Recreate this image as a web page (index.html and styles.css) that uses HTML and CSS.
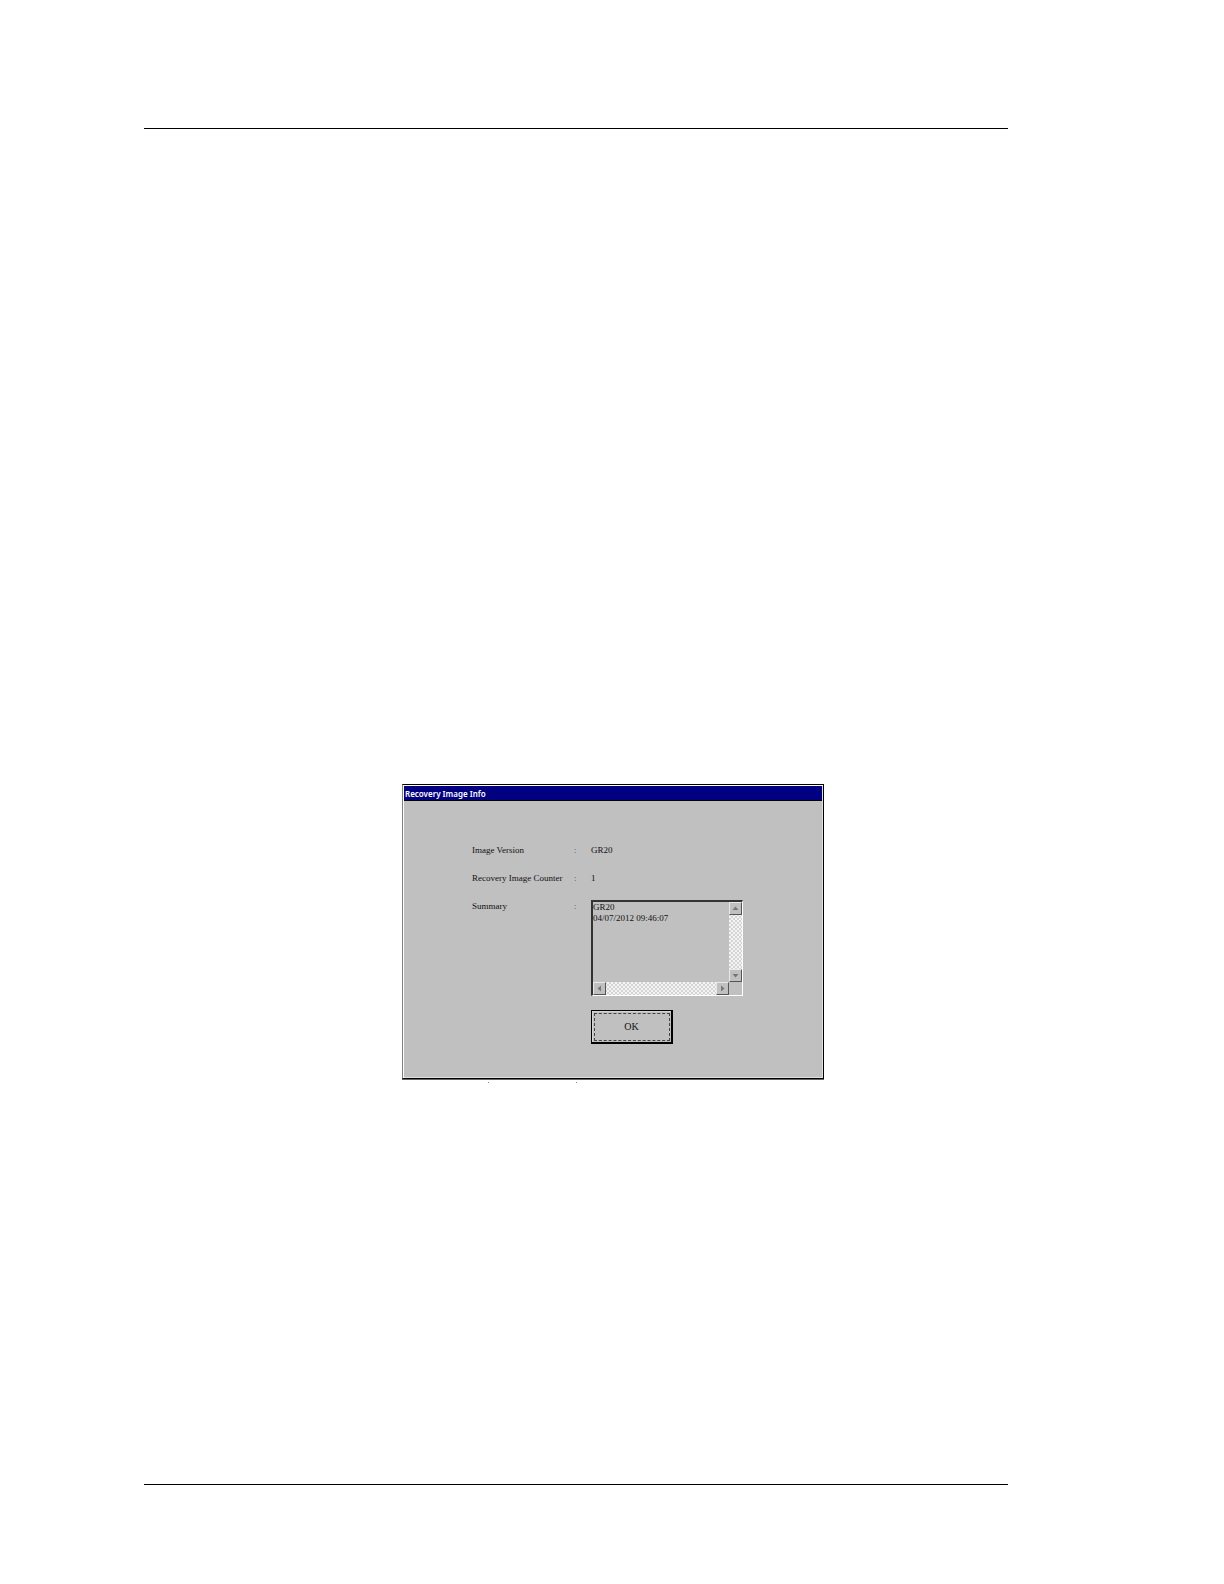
FILE: index.html
```html
<!DOCTYPE html>
<html lang="en">
<head>
  <meta charset="UTF-8" />
  <meta name="viewport" content="width=device-width, initial-scale=1.0"/>
  <title>Recovery Image Info</title>
  <link rel="stylesheet" href="styles.css">
</head>
<body>
  <main class="page">
    <section class="dialog" role="dialog" aria-labelledby="dialog-title">
      <h1 class="title-bar" id="dialog-title">Recovery Image Info</h1>
      <form class="info">
        <span>Image Version</span>
        <span class="colon">:</span>
        <span>GR20</span>

        <span>Recovery Image Counter</span>
        <span class="colon">:</span>
        <span>1</span>

        <label for="summary">Summary</label>
        <span class="colon">:</span>
        <div class="summary-box">
          <textarea id="summary" readonly>GR20
04/07/2012 09:46:07</textarea>
          <div class="scroll-v">
            <button type="button" class="arrow" aria-label="Scroll up"><svg width="7" height="7" viewBox="0 0 7 7"><path d="M3.500 1.500 6.500 5h-6z"/></svg></button>
            <button type="button" class="arrow" aria-label="Scroll down"><svg width="7" height="7" viewBox="0 0 7 7"><path d="M.5 2h6l-3 3.500z"/></svg></button>
          </div>
          <div class="scroll-h">
            <button type="button" class="arrow" aria-label="Scroll left"><svg width="7" height="7" viewBox="0 0 7 7"><path d="M5 .5v6L1.500 3.500z"/></svg></button>
            <button type="button" class="arrow" aria-label="Scroll right"><svg width="7" height="7" viewBox="0 0 7 7"><path d="M2 .5l3.500 3-3.500 3z"/></svg></button>
          </div>
        </div>

        <button type="button" class="ok-btn">OK</button>
      </form>
    </section>
    <div class="marks"><i></i><i></i></div>
  </main>
</body>
</html>
```

FILE: styles.css
```css
* {
  box-sizing: border-box;
}
body {
  margin: 0;
  min-height: 100vh;
  padding: 128px 216px 99px 144px;
  display: flex;
  background: #fff;
  color: #111;
  font-family: "Liberation Serif", "Times New Roman", serif;
  font-size: 9px;
}
.page {
  flex: 1;
  display: flex;
  flex-direction: column;
  align-items: center;
  padding: 655px 0 0 74px;
  border-top: 1px solid #000;
  border-bottom: 1px solid #000;
}

/* dialog window */
.dialog {
  width: 100%;
  max-width: 422px;
  background: #c0c0c0;
  border: 1px solid #000;
  border-left-color: #808080;
  box-shadow: inset 1px 1px #fff, inset -1px -1px #e0e0e0, 0 1px #666;
  padding: 1px;
}
.title-bar {
  margin: 0;
  padding-left: 1px;
  height: 15px;
  line-height: 15px;
  background: #000080;
  border-bottom: 1px solid #000;
  color: #fff;
  font-family: "Noto Sans", "Open Sans", sans-serif;
  font-size: 8px;
  font-weight: 600;
}
.info {
  display: grid;
  grid-template-columns: 102px 17px 1fr;
  grid-template-rows: 28px 28px auto auto;
  padding: 35px 68px 33px;
  line-height: 28px;
}
.colon {
  color: #555;
}

/* summary text with its scroll bars */
.summary-box {
  display: grid;
  grid-template-columns: 1fr 13px;
  grid-template-rows: 1fr 13px;
  width: 152px;
  height: 96px;
  margin-top: 8px;
  border: 1px solid #fff;
  border-top: 2px solid #333;
  border-left: 2px solid #333;
}
.summary-box textarea {
  width: 100%;
  height: 100%;
  margin: 0;
  padding: 0;
  border: 0;
  resize: none;
  overflow: hidden;
  background: #c0c0c0;
  color: #111;
  font-family: inherit;
  font-size: 9px;
  line-height: 11px;
}
.scroll-v,
.scroll-h {
  display: flex;
  justify-content: space-between;
  background: repeating-conic-gradient(#f4f4f4 0% 25%, #d4d4d4 0% 50%) 0 0 / 4px 4px;
}
.scroll-v {
  flex-direction: column;
}
.arrow {
  display: flex;
  align-items: center;
  justify-content: center;
  width: 13px;
  height: 13px;
  padding: 0;
  background: #c0c0c0;
  border: 1px solid #555;
  border-top-color: #e8e8e8;
  border-left-color: #e8e8e8;
}
.arrow svg {
  fill: #777;
}

.ok-btn {
  grid-column: 3;
  width: 82px;
  height: 34px;
  margin: 14px 0 0;
  padding: 0;
  background: #c0c0c0;
  border: 1px solid #000;
  border-right-width: 2px;
  border-bottom-width: 2px;
  box-shadow: inset 1px 1px #d4d4d4;
  outline: 1px dashed #444;
  outline-offset: -4px;
  color: #111;
  font-family: inherit;
  font-size: 10px;
}

/* specks under the frame */
.marks {
  display: flex;
  justify-content: space-between;
  width: 89px;
  margin: 3px 162px 0 0;
}
.marks i {
  width: 1px;
  height: 1px;
  background: #888;
}
```
